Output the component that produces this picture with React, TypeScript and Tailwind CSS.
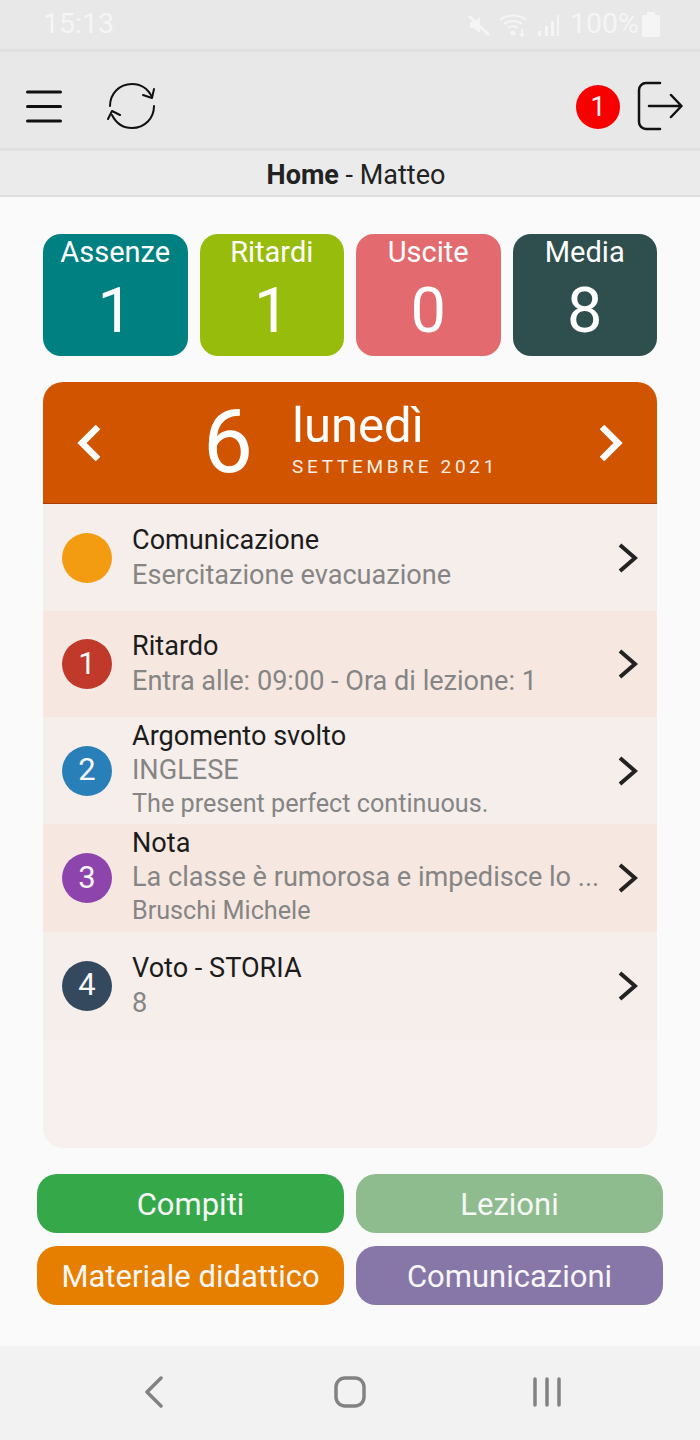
const stats = [
  { label: 'Assenze', value: '1', bg: 'bg-[#008080]' },
  { label: 'Ritardi', value: '1', bg: 'bg-[#97bc0c]' },
  { label: 'Uscite', value: '0', bg: 'bg-[#e36a6e]' },
  { label: 'Media', value: '8', bg: 'bg-[#2f4f4f]' },
];

const rows = [
  { n: '', dot: 'bg-[#f39c12]', bg: 'bg-[#f6eeea]', h: 'h-[107px]', lines: ['Comunicazione', 'Esercitazione evacuazione'] },
  { n: '1', dot: 'bg-[#c0392b]', bg: 'bg-[#f6e8e0]', h: 'h-[106px]', lines: ['Ritardo', 'Entra alle: 09:00 - Ora di lezione: 1'] },
  { n: '2', dot: 'bg-[#2980b9]', bg: 'bg-[#f6eeea]', h: 'h-[107px]', lines: ['Argomento svolto', 'INGLESE', 'The present perfect continuous.'] },
  { n: '3', dot: 'bg-[#8e44ad]', bg: 'bg-[#f6e8e0]', h: 'h-[108px]', lines: ['Nota', 'La classe è rumorosa e impedisce lo ...', 'Bruschi Michele'] },
  { n: '4', dot: 'bg-[#34495e]', bg: 'bg-[#f6eeea]', h: 'h-[107px]', lines: ['Voto - STORIA', '8'] },
];

function StatusBar() {
  return (
    <div className="flex h-[49px] items-center justify-between bg-[#e8e8e8] pl-[43px] pr-[40px] text-[28.500px] text-[#f5f5f5]">
      <span>15:13</span>
      <div className="flex items-center">
        <svg width="24" height="24" viewBox="0 0 24 24" fill="#f5f5f5" className="mr-[7px]">
          <path d="M3 9h4l6-5v16l-6-5H3z" />
          <path d="M2 3l20 19" stroke="#f5f5f5" strokeWidth="3" />
        </svg>
        <svg width="30" height="26" viewBox="0 0 30 26" fill="none" stroke="#f5f5f5" strokeWidth="2" className="mr-[9px]">
          <path d="M2 8c7-6 19-6 26 0M6 12c5-4 13-4 18 0M10 16c3-2 7-2 10 0" />
          <circle cx="15" cy="21" r="1.5" fill="#f5f5f5" />
          <path d="M24 17v7M22 22l2 2 2-2" />
        </svg>
        <svg width="24" height="24" viewBox="0 0 24 24" fill="#f5f5f5" className="mr-[9px]">
          <rect x="1" y="18" width="3" height="5" />
          <rect x="8" y="13" width="3" height="10" />
          <rect x="14" y="8" width="3" height="15" />
          <rect x="20" y="2" width="2" height="21" />
        </svg>
        <span>100%</span>
        <svg width="18" height="25" viewBox="0 0 18 25" fill="#f5f5f5" className="ml-[3px]">
          <path d="M5 0h8v3h3a2 2 0 0 1 2 2v18a2 2 0 0 1-2 2H2a2 2 0 0 1-2-2V5a2 2 0 0 1 2-2h3z" />
        </svg>
      </div>
    </div>
  );
}

function Toolbar() {
  return (
    <div className="flex h-[102px] items-center border-y-[3px] border-y-[#e0e0e0] bg-[#e8e8e8] pl-[26px] pr-[17px] pt-[11px]">
      <svg width="36" height="34" viewBox="0 0 36 34" stroke="#111" strokeWidth="3" strokeLinecap="round">
        <path d="M1.500 3h33M1.500 17.500h33M1.500 32h33" />
      </svg>
      <svg width="50" height="48" viewBox="0 0 50 48" fill="none" stroke="#111" strokeWidth="2" strokeLinecap="round" strokeLinejoin="round" className="ml-[45px]">
        <path d="M3 24C3 12 12 2 25 2c9 0 16 5 20 13" />
        <path d="M47 24c0 12-9 22-22 22-9 0-16-5-20-13" />
        <path d="M47 7l-2 9-9-3" />
        <path d="M1 37l4-8 8 4" />
      </svg>
      <div className="ml-auto mt-[3px] flex h-[44px] w-[44px] items-center justify-center rounded-full bg-[#f60000] text-[27px] text-[#f5f5f5]">1</div>
      <svg width="46" height="50" viewBox="0 0 46 50" fill="none" stroke="#111" strokeWidth="2.500" strokeLinecap="round" strokeLinejoin="round" className="ml-[17px]">
        <path d="M23 2H9a7 7 0 0 0-7 7v32a7 7 0 0 0 7 7h14" />
        <path d="M12 25h32M34 14l10.500 11L34 36" />
      </svg>
    </div>
  );
}

function RowChevron() {
  return (
    <svg width="20" height="30" viewBox="0 0 20 30" fill="none" stroke="#222" strokeWidth="4" className="mr-[19px] ml-[20px] shrink-0">
      <path d="M2 2l15 13L2 28" />
    </svg>
  );
}

function HeaderChevron({ flip }: { flip?: boolean }) {
  return (
    <svg width="24" height="36" viewBox="0 0 24 36" fill="none" stroke="#fff" strokeWidth="6.500" className={flip ? 'ml-auto rotate-180' : ''}>
      <path d="M21 2L5 18l16 16" />
    </svg>
  );
}

function Row({ r }: { r: (typeof rows)[number] }) {
  const [title, second, third] = r.lines;
  return (
    <div className={`flex items-center pl-[19px] ${r.bg} ${r.h}`}>
      <div className={`flex h-[50px] w-[50px] shrink-0 items-center justify-center rounded-full text-[31px] text-[#f8f8f8] ${r.dot}`}>{r.n}</div>
      <div className={`ml-[20px] min-w-0 flex-1 whitespace-nowrap text-[#858585] ${third ? 'pb-[2px] leading-[34px]' : 'leading-[35px]'}`}>
        <div className="text-[27.100px] text-[#1c1c1c]">{title}</div>
        <div className="text-[27.100px]">{second}</div>
        {third && <div className="text-[25.200px]">{third}</div>}
      </div>
      <RowChevron />
    </div>
  );
}

export default function App() {
  return (
    <div className="flex h-[1440px] w-[700px] flex-col overflow-hidden bg-[#fafafa] font-['Roboto',sans-serif]">
      <StatusBar />
      <Toolbar />
      <div className="flex h-[46px] items-center justify-center border-b-[2px] border-b-[#dedede] bg-[#ebebeb] pl-[12px] pt-[4px] text-[27px] text-[#222]">
        <span className="font-bold">Home</span>
        <span className="whitespace-pre"> - Matteo</span>
      </div>

      <div className="flex flex-1 flex-col pt-[37px]">
        <div className="mx-[43px] grid grid-cols-4 gap-x-[12px]">
          {stats.map((s) => (
            <div key={s.label} className={`flex h-[122px] flex-col items-center rounded-[18px] text-white ${s.bg}`}>
              <span className="text-[29px] leading-[36px]">{s.label}</span>
              <span className="mt-[5px] text-[63px] leading-[72px]">{s.value}</span>
            </div>
          ))}
        </div>

        <div className="mx-[43px] mt-[26px] flex h-[766px] flex-col overflow-hidden rounded-[20px] bg-[#f8f0ee]">
          <div className="flex h-[122px] shrink-0 items-center border-b-[1px] border-b-[#a83c00] bg-[#d15400] px-[34px] text-white">
            <HeaderChevron />
            <span className="ml-[102px] mt-[-2px] text-[89px] leading-none">6</span>
            <div className="ml-[39px] flex flex-col">
              <span className="mt-[-6px] text-[49px] leading-[52px]">lunedì</span>
              <span className="mt-[3px] text-[19px] leading-[24px] tracking-[3.700px] text-[#fbeee4]">SETTEMBRE 2021</span>
            </div>
            <HeaderChevron flip />
          </div>
          {rows.map((r) => (
            <Row key={r.lines[0]} r={r} />
          ))}
        </div>

        <div className="mx-[37px] mt-[26px] grid grid-cols-2 gap-x-[12px] gap-y-[13px] text-[31px] text-[#f7f7f7]">
          <div className="flex h-[59px] items-center justify-center rounded-[20px] bg-[#35a94a] pt-[3px]">Compiti</div>
          <div className="flex h-[59px] items-center justify-center rounded-[20px] bg-[#8fbc8f] pt-[3px]">Lezioni</div>
          <div className="flex h-[59px] items-center justify-center rounded-[20px] bg-[#e67e00] pt-[3px]">Materiale didattico</div>
          <div className="flex h-[59px] items-center justify-center rounded-[20px] bg-[#8776a8] pt-[3px]">Comunicazioni</div>
        </div>
      </div>

      <div className="flex h-[94px] items-center bg-[#f2f2f2] pb-[3px]">
        <svg width="20" height="32" viewBox="0 0 20 32" fill="none" stroke="#828282" strokeWidth="3.500" strokeLinecap="round" strokeLinejoin="round" className="ml-[144px]">
          <path d="M17 2L3 16l14 14" />
        </svg>
        <svg width="32" height="32" viewBox="0 0 32 32" fill="none" stroke="#828282" strokeWidth="3.500" className="ml-[170px]">
          <rect x="2" y="2" width="28" height="28" rx="9" />
        </svg>
        <svg width="28" height="30" viewBox="0 0 28 30" stroke="#828282" strokeWidth="3.500" strokeLinecap="round" className="ml-[167px]">
          <path d="M2 2v26M14 2v26M26 2v26" />
        </svg>
      </div>
    </div>
  );
}
